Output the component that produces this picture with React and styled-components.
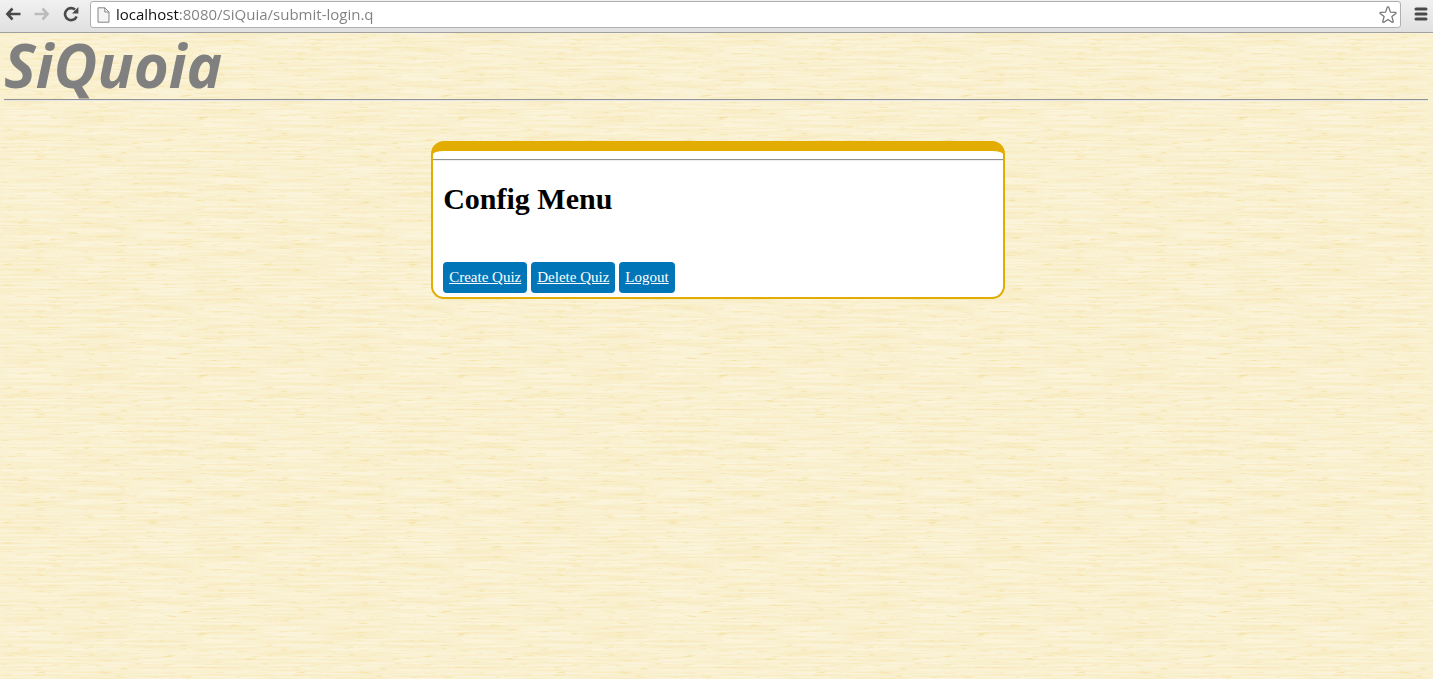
import React from "react";
import styled, { createGlobalStyle } from "styled-components";

const grain = (seed, frequency, matrix) =>
  `<filter id="g${seed}" x="0" y="0" width="100%" height="100%" color-interpolation-filters="sRGB">` +
  `<feTurbulence type="fractalNoise" baseFrequency="${frequency}" numOctaves="3" seed="${seed}" stitchTiles="stitch"/>` +
  `<feColorMatrix values="${matrix}"/></filter>` +
  `<rect width="260" height="258" filter="url(#g${seed})"/>`;

const woodTile =
  `<svg xmlns="http://www.w3.org/2000/svg" width="260" height="258">` +
  `<rect width="260" height="258" fill="#fbf4db"/>` +
  grain(4, "0.016 0.5", "0 0 0 0 0.95  0 0 0 0 0.87  0 0 0 0 0.6  0.9 0 0 0 -0.29") +
  grain(9, "0.06 0.45", "0 0 0 0 0.94  0 0 0 0 0.82  0 0 0 0 0.46  1.8 0 0 0 -1.14") +
  `</svg>`;

const GlobalStyle = createGlobalStyle`
  *, *::before, *::after { box-sizing: border-box; }
  html, body, #root { min-height: 100vh; }
  body {
    margin: 0;
    font-family: "Liberation Serif", "Times New Roman", serif;
    color: #000;
  }
  #root { display: flex; flex-direction: column; }
`;

const BrowserBar = styled.header`
  display: flex;
  align-items: center;
  height: 33px;
  padding: 0 0 4px 4px;
  border-bottom: 1px solid #a0a0a0;
  background: linear-gradient(#f1f1f1, #e0e0e0);
`;

const ToolButton = styled.button`
  display: flex;
  align-items: center;
  justify-content: center;
  width: ${(p) => (p.$narrow ? "24px" : "29px")};
  height: 27px;
  padding: 0;
  border: 0;
  background: none;
  color: ${(p) => (p.$faded ? "#bcbcbc" : "#4a4a4a")};
`;

const NavGroup = styled.nav`
  display: flex;
  width: 86px;
  margin-left: -5px;
  margin-right: 5px;
`;

const AddressBox = styled.form`
  display: flex;
  flex: 1;
  align-items: center;
  height: 27px;
  margin: 1px 8px 0 0;
  padding: 0 0 0 6px;
  border: 1px solid #b0b0b0;
  border-radius: 3px;
  background: #fff;
  color: #808080;
`;

const AddressInput = styled.input`
  flex: 1;
  min-width: 0;
  height: 24px;
  margin-left: 6px;
  padding: 0 0 2px;
  border: 0;
  outline: 0;
  font: 15px/22px "Open Sans", "Noto Sans", sans-serif;
  color: transparent;
  caret-color: #222;
  background: linear-gradient(90deg, #111 63px, #808080 63px);
  background-clip: text;
  -webkit-background-clip: text;
`;

const Page = styled.main`
  flex: 1;
  padding: 4px 5px 24px 4px;
  background: url("data:image/svg+xml,${encodeURIComponent(woodTile)}");
`;

const Logo = styled.div`
  height: 62px;
  font: italic 700 60px/56px "Open Sans", "Noto Sans", sans-serif;
  color: #808080;
`;

const Rule = styled.hr`
  height: 2px;
  margin: 0;
  border: 0;
  border-top: 1px solid #929292;
  border-bottom: 1px solid ${(p) => (p.$soft ? "#eee" : "#e6e6e6")};
`;

const Card = styled.section`
  box-sizing: content-box;
  width: 40%;
  min-width: 270px;
  margin: 40px 0 0 30%;
  padding: 8px 0 4px;
  border: 2px solid #e2ac00;
  border-top-width: 10px;
  border-radius: 13px;
  background: #fff;
`;

const CardBody = styled.div`
  padding: 20px 10px 0;
`;

const Title = styled.h1`
  margin: 0;
  font-size: 30px;
  line-height: 36px;
`;

const Actions = styled.div`
  display: flex;
  flex-wrap: wrap;
  gap: 4px;
  margin-top: 45px;
`;

const ActionLink = styled.a`
  padding: 6px 6px 7px;
  border-radius: 4px;
  background: #0076b8;
  color: #fff;
  font-size: 15px;
  line-height: 18px;
`;

const actions = ["Create Quiz", "Delete Quiz", "Logout"];

const Arrow = ({ flip }) => (
  <svg width="16" height="14" viewBox="0 0 16 14" fill="none" stroke="currentColor" strokeWidth="2.6" transform={flip ? "scale(-1 1)" : undefined}>
    <path d="M7.5 1.5 2.4 7 7.5 12.5M2.6 7H15.5" />
  </svg>
);

const Reload = () => (
  <svg width="16" height="16" viewBox="0 0 16 16">
    <path d="M13.6 10.4A6 6 0 1 1 12 3.6" fill="none" stroke="currentColor" strokeWidth="2.6" />
    <path d="M15.4 1v6.4H9z" fill="currentColor" />
  </svg>
);

const PageIcon = () => (
  <svg width="13" height="16" viewBox="0 0 13 16" fill="#f4f4f4" stroke="#858585">
    <path d="M1 .8h6.8L12 5v10.2H1zM7.8.8V5H12" />
  </svg>
);

const Star = () => (
  <svg width="20" height="20" viewBox="0 0 20 20" fill="#fff" stroke="#777" strokeWidth="1.3" strokeLinejoin="round">
    <path d="M10 1.8Q10.6 1.8 10.9 2.6L12.4 7.1 17.2 7.3Q18.8 7.6 17.6 8.7L13.9 11.6 15.2 16.3Q15.3 17.8 14 17.2L10 14.5 6 17.2Q4.7 17.8 4.8 16.3L6.1 11.6 2.4 8.7Q1.2 7.6 2.8 7.3L7.6 7.1 9.1 2.6Q9.4 1.8 10 1.8z" />
  </svg>
);

const Menu = () => (
  <svg width="14" height="14" viewBox="0 0 14 14" stroke="currentColor" strokeWidth="3" strokeLinecap="round">
    <path d="M2 2h10M2 7h10M2 12h10" />
  </svg>
);

export default function App() {
  return (
    <>
      <GlobalStyle />
      <BrowserBar>
        <NavGroup aria-label="Browser">
          <ToolButton aria-label="Back"><Arrow /></ToolButton>
          <ToolButton aria-label="Forward" $faded><Arrow flip /></ToolButton>
          <ToolButton aria-label="Reload"><Reload /></ToolButton>
        </NavGroup>
        <AddressBox onSubmit={(e) => e.preventDefault()}>
          <PageIcon />
          <AddressInput aria-label="Address" defaultValue="localhost:8080/SiQuia/submit-login.q" spellCheck={false} />
          <ToolButton type="button" aria-label="Bookmark" $narrow><Star /></ToolButton>
        </AddressBox>
        <ToolButton aria-label="Menu" $narrow><Menu /></ToolButton>
      </BrowserBar>
      <Page>
        <Logo>SiQuoia</Logo>
        <Rule />
        <Card>
          <Rule $soft />
          <CardBody>
            <Title>Config Menu</Title>
            <Actions>
              {actions.map((label) => (
                <ActionLink key={label} href="#">{label}</ActionLink>
              ))}
            </Actions>
          </CardBody>
        </Card>
      </Page>
    </>
  );
}
